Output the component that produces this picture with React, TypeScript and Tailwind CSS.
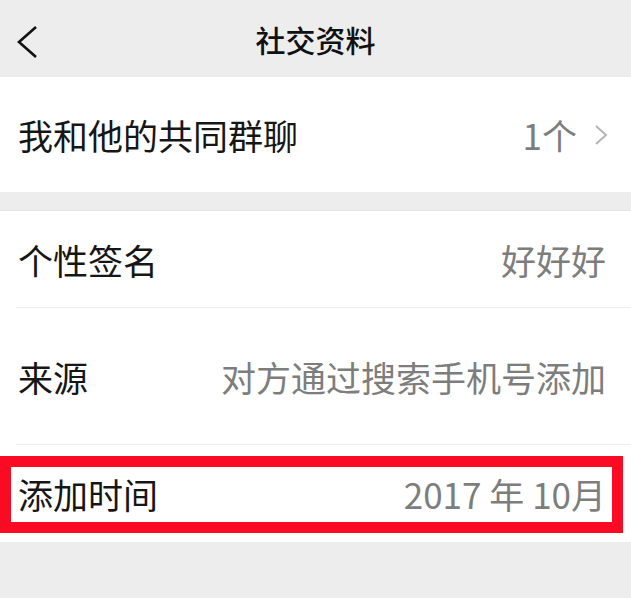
const font = { fontFamily: '"Noto Sans CJK SC", "Noto Sans", sans-serif' }

function Row({
  label,
  value,
  height,
  chevron,
  divider,
  children,
}: {
  label: string
  value: string
  height: string
  chevron?: boolean
  divider?: boolean
  children?: React.ReactNode
}) {
  return (
    <div className={`relative ${height}`}>
      <div className="flex h-full items-center justify-between pl-[18px] pr-[25px]">
        <span className="text-[35px] leading-none text-[#161616]">{label}</span>
        <div className="flex items-center">
          <span className="text-[35px] leading-none text-[#7d7d7d]">{value}</span>
          {chevron && (
            <svg width="14" height="22" viewBox="0 0 14 22" className="ml-[17px] mr-[-2px]">
              <polyline points="2,2 12,11 2,20" fill="none" stroke="#b4b4b4" strokeWidth="2" />
            </svg>
          )}
        </div>
      </div>
      {divider && <div className="absolute bottom-0 left-[16px] right-0 h-px bg-[#ececec]" />}
      {children}
    </div>
  )
}

export default function App() {
  return (
    <div className="min-h-[598px] w-[631px] bg-[#ededed]" style={font}>
      <header className="relative flex h-[77px] items-center justify-center">
        <svg width="24" height="36" viewBox="0 0 24 36" className="absolute left-[16px] top-[24px]">
          <polyline points="20,3 3,18 20,33" fill="none" stroke="#111" strokeWidth="2.6" />
        </svg>
        <h1 className="text-[30px] font-medium leading-none text-[#111]">社交资料</h1>
      </header>

      <section className="bg-white">
        <Row label="我和他的共同群聊" value="1个" height="h-[115px]" chevron />
      </section>

      <section className="mt-[18px] border-t border-[#e6e6e6] bg-white">
        <Row label="个性签名" value="好好好" height="h-[97px]" divider />
        <Row label="来源" value="对方通过搜索手机号添加" height="h-[137px]" divider />
        <Row label="添加时间" value="2017 年 10月" height="h-[97px]">
          <div className="absolute left-0 top-[11px] h-[77px] w-[623px] border-[11px] border-[#fb0a23]" />
        </Row>
      </section>
    </div>
  )
}
